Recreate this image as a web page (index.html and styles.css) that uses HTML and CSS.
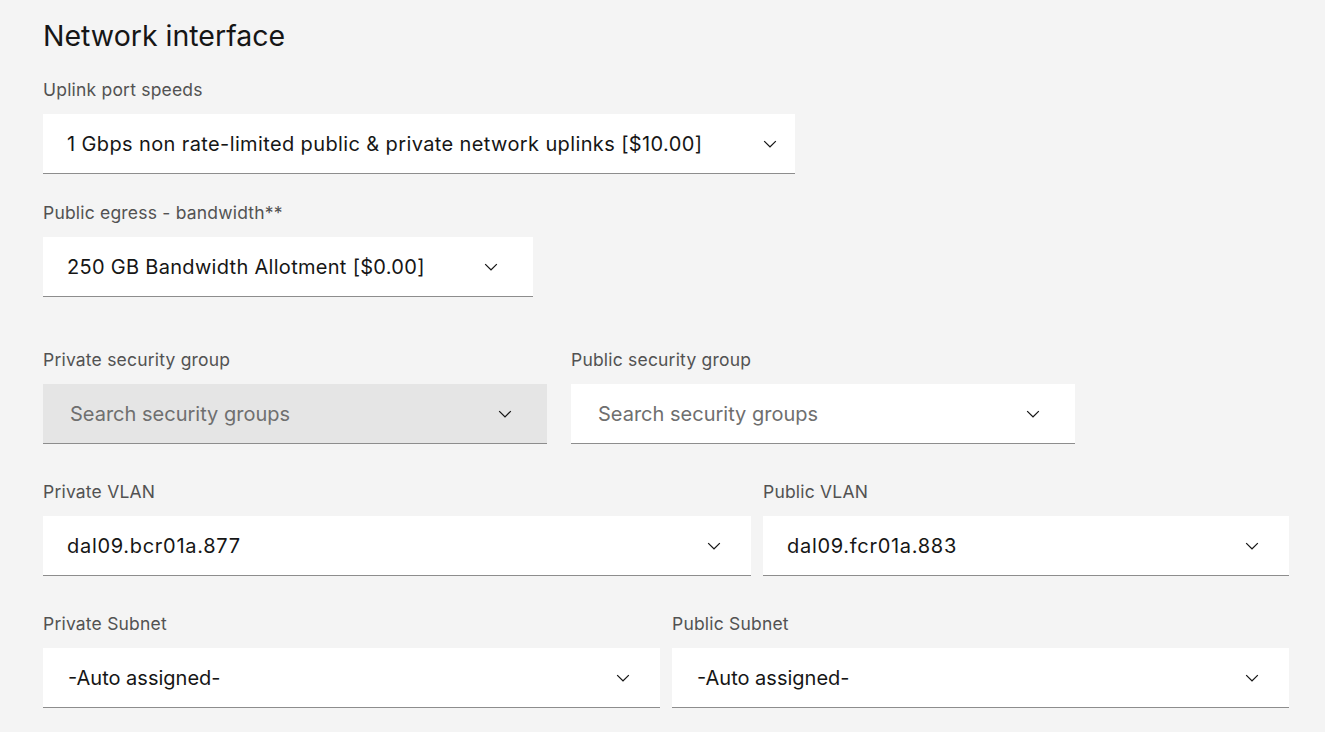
FILE: index.html
```html
<!DOCTYPE html>
<html lang="en">
<head>
<meta charset="utf-8">
<title>Network interface</title>
<link rel="stylesheet" href="styles.css">
</head>
<body>
<main class="page">
  <h1 class="title">Network interface</h1>

  <div class="field f-uplink">
    <div class="label">Uplink port speeds</div>
    <div class="select sel-a">
      <span class="value wide">1 Gbps non rate-limited public &amp; private network uplinks [$10.00]</span>
      <svg class="chev" viewBox="0 0 16 16" aria-hidden="true"><path d="M8 11L3 6 3.7 5.3 8 9.6 12.3 5.3 13 6z"/></svg>
    </div>
  </div>

  <div class="field f-egress">
    <div class="label">Public egress - bandwidth**</div>
    <div class="select sel-b">
      <span class="value">250 GB Bandwidth Allotment [$0.00]</span>
      <svg class="chev" viewBox="0 0 16 16" aria-hidden="true"><path d="M8 11L3 6 3.7 5.3 8 9.6 12.3 5.3 13 6z"/></svg>
    </div>
  </div>

  <div class="row row-sg">
    <div class="field">
      <div class="label">Private security group</div>
      <div class="select sel-c disabled">
        <span class="value placeholder">Search security groups</span>
        <svg class="chev" viewBox="0 0 16 16" aria-hidden="true"><path d="M8 11L3 6 3.7 5.3 8 9.6 12.3 5.3 13 6z"/></svg>
      </div>
    </div>
    <div class="field">
      <div class="label">Public security group</div>
      <div class="select sel-c">
        <span class="value placeholder">Search security groups</span>
        <svg class="chev" viewBox="0 0 16 16" aria-hidden="true"><path d="M8 11L3 6 3.7 5.3 8 9.6 12.3 5.3 13 6z"/></svg>
      </div>
    </div>
  </div>

  <div class="row row-vlan">
    <div class="field">
      <div class="label">Private VLAN</div>
      <div class="select sel-d">
        <span class="value code">dal09.bcr01a.877</span>
        <svg class="chev" viewBox="0 0 16 16" aria-hidden="true"><path d="M8 11L3 6 3.7 5.3 8 9.6 12.3 5.3 13 6z"/></svg>
      </div>
    </div>
    <div class="field">
      <div class="label">Public VLAN</div>
      <div class="select sel-d">
        <span class="value code">dal09.fcr01a.883</span>
        <svg class="chev" viewBox="0 0 16 16" aria-hidden="true"><path d="M8 11L3 6 3.7 5.3 8 9.6 12.3 5.3 13 6z"/></svg>
      </div>
    </div>
  </div>

  <div class="row row-subnet">
    <div class="field">
      <div class="label">Private Subnet</div>
      <div class="select sel-e">
        <span class="value tight">-Auto assigned-</span>
        <svg class="chev" viewBox="0 0 16 16" aria-hidden="true"><path d="M8 11L3 6 3.7 5.3 8 9.6 12.3 5.3 13 6z"/></svg>
      </div>
    </div>
    <div class="field">
      <div class="label">Public Subnet</div>
      <div class="select sel-e">
        <span class="value tight">-Auto assigned-</span>
        <svg class="chev" viewBox="0 0 16 16" aria-hidden="true"><path d="M8 11L3 6 3.7 5.3 8 9.6 12.3 5.3 13 6z"/></svg>
      </div>
    </div>
  </div>
</main>
</body>
</html>
```

FILE: styles.css
```css
* { box-sizing: border-box; }

html, body {
  margin: 0;
  padding: 0;
  background: #f4f4f4;
}

body {
  font-family: Inter, "Open Sans", sans-serif;
  color: #161616;
}

.page {
  padding: 18px 36px 0 43px;
  width: 1325px;
}

.title {
  margin: 0;
  font-size: 28.5px;
  font-weight: 400;
  line-height: 36px;
  color: #161616;
}

.field {
  display: flex;
  flex-direction: column;
}

.label {
  font-size: 17.5px;
  letter-spacing: 0.2px;
  line-height: 24px;
  color: #525252;
  margin-bottom: 12px;
  white-space: nowrap;
}

.select {
  height: 60px;
  background: #ffffff;
  border-bottom: 1px solid #8d8d8d;
  display: flex;
  align-items: center;
  justify-content: space-between;
  padding-left: 24px;
}

.select.disabled {
  background: #e5e5e5;
}

.value {
  font-size: 20px;
  letter-spacing: 0.3px;
  line-height: 26px;
  color: #161616;
  white-space: nowrap;
}

.value.wide {
  letter-spacing: 0.38px;
}

.value.code {
  letter-spacing: 0.7px;
}

.value.tight {
  letter-spacing: 0;
}

.value.placeholder {
  color: #6f6f6f;
  letter-spacing: 0;
}

.chev {
  width: 20px;
  height: 20px;
  fill: #161616;
  flex: none;
}

.f-uplink { margin-top: 24px; width: 752px; }
.f-egress { margin-top: 27px; width: 490px; }

.row { display: grid; }
.row-sg { margin-top: 51px; grid-template-columns: 504px 504px; column-gap: 24px; }
.row-vlan { margin-top: 36px; grid-template-columns: 708px 526px; column-gap: 12px; }
.row-subnet { margin-top: 36px; grid-template-columns: 617px 617px; column-gap: 12px; }

.sel-a { padding-right: 15px; }
.sel-b { padding-right: 32px; }
.sel-c { padding-left: 27px; padding-right: 32px; }
.sel-d { padding-right: 27px; }
.sel-e { padding-left: 25px; padding-right: 27px; }
```
